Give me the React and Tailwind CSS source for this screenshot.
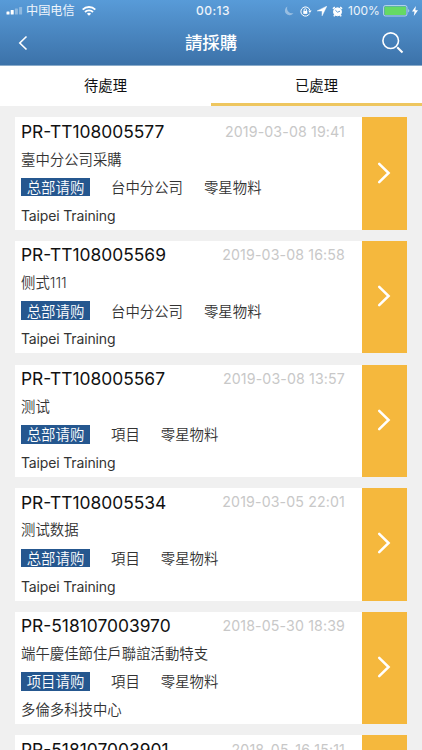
import React from 'react';

const ORDERS = [
  { id: 'PR-TT108005577', date: '2019-03-08 19:41', title: '臺中分公司采購', type: '总部请购', dept: '台中分公司', item: '零星物料', project: 'Taipei Training' },
  { id: 'PR-TT108005569', date: '2019-03-08 16:58', title: '侧式111', type: '总部请购', dept: '台中分公司', item: '零星物料', project: 'Taipei Training' },
  { id: 'PR-TT108005567', date: '2019-03-08 13:57', title: '测试', type: '总部请购', dept: '項目', item: '零星物料', project: 'Taipei Training' },
  { id: 'PR-TT108005534', date: '2019-03-05 22:01', title: '测试数据', type: '总部请购', dept: '項目', item: '零星物料', project: 'Taipei Training' },
  { id: 'PR-518107003970', date: '2018-05-30 18:39', title: '端午慶佳節住戶聯誼活動特支', type: '项目请购', dept: '項目', item: '零星物料', project: '多倫多科技中心' },
  { id: 'PR-518107003901', date: '2018-05-16 15:11' },
];

function StatusBar() {
  return (
    <div className="relative flex h-[22px] items-center justify-between pl-[6px] pr-[4px] text-[12px] leading-none text-white/90">
      <div className="flex items-center">
        <svg width="17" height="8" viewBox="0 0 17 8" fill="white">
          <rect x="0.5" y="4.5" width="3" height="3" rx="0.5" />
          <rect x="4.7" y="3" width="3" height="4.5" rx="0.5" />
          <rect x="8.9" y="1.5" width="3" height="6" rx="0.5" opacity="0.35" />
          <rect x="13.1" y="0" width="3" height="7.5" rx="0.5" opacity="0.35" />
        </svg>
        <span className="ml-[3px] pt-px text-[12.2px]">中国电信</span>
        <svg className="ml-[7px]" width="14" height="10" viewBox="0 0 14 10" fill="none" stroke="white" strokeWidth="1.9">
          <path d="M0.7 3.6a9 9 0 0 1 12.6 0" />
          <path d="M3 6a5.7 5.7 0 0 1 8 0" />
          <path d="M7 9.8 4.9 7.7a3 3 0 0 1 4.2 0Z" fill="white" stroke="none" />
        </svg>
      </div>

      <span className="absolute left-[196px] text-[12px] font-medium tracking-[0.45px]">00:13</span>

      <div className="flex items-center">
        <svg width="10" height="10" viewBox="0 0 10 10" fill="white" opacity="0.4">
          <path d="M3.4 0.6A4.6 4.6 0 1 0 9.5 7 4.9 4.9 0 0 1 3.4 0.6Z" />
        </svg>
        <svg className="ml-[6px]" width="12" height="11" viewBox="0 0 12 11" fill="none" stroke="white" strokeWidth="1">
          <path d="M9.6 7.6A4.6 4.6 0 1 1 9.9 4.2" />
          <path d="M8.2 4.6h3.4L9.9 7Z" fill="white" stroke="none" />
          <rect x="3.3" y="4.9" width="4" height="3" fill="white" stroke="none" />
          <path d="M4.1 5V3.9a1.2 1.2 0 0 1 2.4 0V5" strokeWidth="0.9" />
        </svg>
        <svg className="ml-[5px]" width="10" height="10" viewBox="0 0 10 10" fill="white">
          <path d="M9.8 0.2 0.2 4.9h4.9v4.9Z" stroke="white" strokeWidth="0.5" />
        </svg>
        <svg className="ml-[5px]" width="11" height="11" viewBox="0 0 11 11" fill="none" stroke="white">
          <circle cx="5.5" cy="5.8" r="4" fill="white" />
          <path d="M0.9 2.7 2.8 1M10.1 2.7 8.2 1M2.6 9.2 1.9 10.3M8.4 9.2l0.7 1.1" strokeWidth="1.5" />
          <path d="M3.4 4.2 5.5 6.2 8 5.2" stroke="#4f8fcb" strokeWidth="0.9" />
        </svg>
        <span className="ml-[5px] w-[32px] whitespace-nowrap text-[12px]">100%</span>
        <svg className="ml-[3px]" width="27" height="12" viewBox="0 0 27 12">
          <rect x="0.5" y="0.5" width="23.5" height="10.5" rx="2" fill="none" stroke="white" strokeOpacity="0.55" />
          <rect x="1.5" y="1.5" width="21.5" height="8.5" rx="0.8" fill="#65d964" />
          <path d="M25.2 4v3.6a2 2 0 0 0 0-3.6Z" fill="white" opacity="0.55" />
        </svg>
        <svg className="ml-[2px]" width="6" height="10" viewBox="0 0 6 10" fill="white">
          <path d="M3.8 0 0 5.6h2.5L1.8 10 6 4.2H3.4Z" />
        </svg>
      </div>
    </div>
  );
}

function OrderCard({ order }) {
  return (
    <div className="flex h-[112.4px] shrink-0 bg-white text-[14.4px] font-[350] text-[#333]">
      <div className="flex min-w-0 flex-1 flex-col pl-[6px] pr-[17px] pt-[2.5px]">
        <div className="flex h-[23px] items-center justify-between whitespace-nowrap font-normal">
          <span className="pt-px text-[17.4px] text-[#111]">{order.id}</span>
          <span className="text-[14.2px] tracking-[0.13px] text-[#c8c8c8]">{order.date}</span>
        </div>
        {order.title && (
          <>
            <div className="mt-[6.5px] flex h-[20px] items-center">{order.title}</div>
            <div className="mt-[8.5px] flex h-[18.5px] items-center">
              <span className="flex h-[18.5px] w-[69px] items-center justify-center bg-[#25578f] pt-[1.5px] text-white">{order.type}</span>
              <span className="ml-[21px] pt-[1.5px]">{order.dept}</span>
              <span className="ml-[21px] pt-[1.5px]">{order.item}</span>
            </div>
            <div className="mt-[8px] flex h-[22px] items-center">
              {order.project.startsWith('Taipei') ? <span className="text-[14px] font-normal tracking-[-0.15px]">{order.project}</span> : order.project}
            </div>
          </>
        )}
      </div>
      <div className="flex w-[45px] items-center justify-center bg-[#f5b83d]">
        <svg className="mb-[2px] mr-[2px]" width="14" height="22" viewBox="0 0 14 22" fill="none" stroke="white" strokeWidth="2.5" strokeLinecap="round">
          <path d="M2.2 1.8 11.6 11 2.2 20.2" />
        </svg>
      </div>
    </div>
  );
}

export default function App() {
  return (
    <div className="flex h-[750px] w-[422px] flex-col overflow-hidden bg-[#f0f0f0] font-['Inter','Noto_Sans_CJK_SC',sans-serif]">
      {/* Header */}
      <header className="h-[66px] shrink-0 border-b border-[#8aabca] bg-linear-to-b from-[#589bd8] to-[#3c72a9]">
        <StatusBar />
        <div className="flex h-[43px] items-center justify-between pl-[18px] pr-[18px] text-white">
          <svg className="mb-px" width="10" height="16" viewBox="0 0 10 16" fill="none" stroke="white" strokeWidth="1.6">
            <path d="M8.5 1.5 1.8 8l6.7 6.5" />
          </svg>
          <h1 className="ml-[12px] font-['Inter','Noto_Sans_CJK_TC',sans-serif] text-[17.4px] font-medium">請採購</h1>
          <svg className="mb-[2px]" width="22" height="22" viewBox="0 0 22 22" fill="none" stroke="white" strokeWidth="1.6">
            <circle cx="8.7" cy="8.7" r="7.8" />
            <path d="m15.2 15.2 5.3 5.3" strokeWidth="2" />
          </svg>
        </div>
      </header>

      {/* Tabs */}
      <nav className="grid h-[40px] shrink-0 grid-cols-2 bg-white font-['Inter','Noto_Sans_CJK_TC',sans-serif] text-[14.3px] text-[#111]">
        <div className="flex items-center justify-center">待處理</div>
        <div className="flex items-center justify-center border-b-[3px] border-[#eec65f] pt-[3px]">已處理</div>
      </nav>

      {/* Orders */}
      <main className="flex flex-col gap-[11.2px] pl-[15px] pr-[15px] pt-[11.4px]">
        {ORDERS.map((order) => (
          <OrderCard key={order.id} order={order} />
        ))}
      </main>
    </div>
  );
}
